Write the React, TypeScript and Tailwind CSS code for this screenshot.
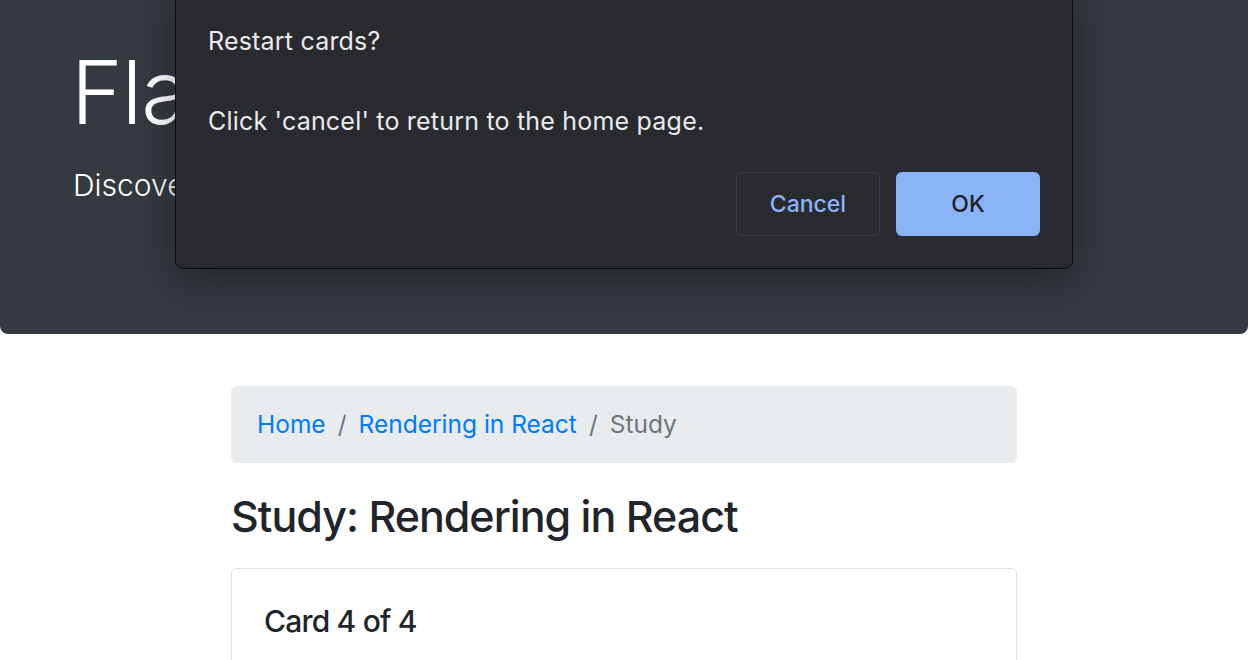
import React from 'react'

// Bootstrap-ish study page with a native "confirm" dialog laid over it

const font = "font-['Inter','Noto_Sans',sans-serif]"

function ConfirmDialog() {
  return (
    <div className="absolute left-[175px] top-[-20px] w-[898px] h-[289px] bg-[#292a2d] border border-[#0b0b0c] rounded-[8px] shadow-[0_10px_40px_rgba(0,0,0,0.35)] text-[#e8eaed]">
      <div className="pl-[32px] pt-[40px]">
        <p className="text-[25px] leading-[40px] tracking-[0.2px]">Restart cards?</p>
        <p className="text-[25px] leading-[40px] tracking-[0.2px] mt-[40px]">Click 'cancel' to return to the home page.</p>
      </div>
      <div className="flex justify-end gap-[16px] pr-[32px] mt-[31px]">
        <button className="w-[144px] h-[64px] rounded-[6px] border border-[#3c3d41] text-[#8ab4f8] text-[23px] font-medium">
          Cancel
        </button>
        <button className="w-[144px] h-[64px] rounded-[6px] bg-[#8ab4f8] text-[#202124] text-[23px] font-medium">
          OK
        </button>
      </div>
    </div>
  )
}

export default function App() {
  return (
    <div className={`relative w-[1248px] h-[660px] overflow-hidden bg-white ${font}`}>
      <div className="h-[334px] bg-[#343a40] rounded-b-[8px] pl-[71px] pt-[44px] text-white">
        <h1 className="text-[88px] leading-[96px] font-light tracking-[-1px]">Flashcard-o-matic</h1>
        <p className="text-[30px] leading-[40px] font-light mt-[25px] pl-[2px]">Discover The Flashcard Difference.</p>
      </div>

      <div className="w-[786px] mx-auto mt-[52px]">
        <nav className="h-[77px] bg-[#e9ecef] rounded-[6px] px-[26px] flex items-center text-[24.5px]">
          <a className="text-[#007bff]">Home</a>
          <span className="px-[12px] text-[#6c757d]">/</span>
          <a className="text-[#007bff]">Rendering in React</a>
          <span className="px-[12px] text-[#6c757d]">/</span>
          <span className="text-[#6c757d]">Study</span>
        </nav>

        <h2 className="mt-[22px] text-[43px] leading-[62px] font-medium text-[#212529] tracking-[-1px]">
          Study: Rendering in React
        </h2>

        <div className="mt-[21px] border border-[#dee2e6] rounded-[6px] px-[32px] pt-[32px] h-[200px]">
          <h5 className="text-[30px] leading-[40px] font-medium text-[#212529] tracking-[-0.8px]">Card 4 of 4</h5>
        </div>
      </div>

      <ConfirmDialog />
    </div>
  )
}
